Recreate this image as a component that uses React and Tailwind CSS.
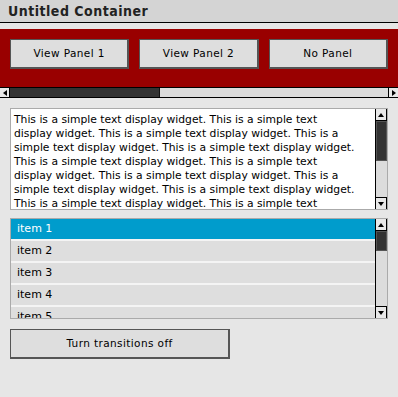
import React from 'react';

// --- small retro widgets ---

const Arrow = ({ dir }) => {
  const pts = {
    up: '1,6 4,2 7,6',
    down: '1,2 4,6 7,2',
    left: '6,1 2,4 6,7',
    right: '2,1 6,4 2,7',
  };
  return (
    <svg width="8" height="8" viewBox="0 0 8 8">
      <polygon points={pts[dir]} fill="#000" />
    </svg>
  );
};

const ArrowBox = ({ dir, className = '' }) => (
  <div className={`flex items-center justify-center bg-[#e8e8e8] border border-black ${className}`}>
    <Arrow dir={dir} />
  </div>
);

const VScroll = ({ thumbTop, thumbHeight }) => (
  <div className="flex flex-col w-[12px] h-full bg-[#dcdcdc] border-l border-black">
    <ArrowBox dir="up" className="h-[12px] border-l-0 border-t-0" />
    <div className="flex-1 flex flex-col">
      <div style={{ height: thumbTop }} />
      <div className="bg-[#333] border border-[#555]" style={{ height: thumbHeight }} />
    </div>
    <ArrowBox dir="down" className="h-[12px] border-l-0 border-b-0" />
  </div>
);

const RetroButton = ({ children, className = '' }) => (
  <button
    className={`h-[30px] bg-[#dedede] border border-[#555] border-b-2 border-r-2 text-[10.5px] tracking-[0.4px] text-black ${className}`}
    style={{ fontFamily: '"DejaVu Sans", sans-serif' }}
  >
    {children}
  </button>
);

const App = () => {
  const textLines = [
    'This is a simple text display widget. This is a simple text',
    'display widget. This is a simple text display widget. This is a',
    'simple text display widget. This is a simple text display widget.',
  ];
  // only the lines visible in the box
  const lines = [...textLines, ...textLines, textLines[0]];
  const items = ['item 1', 'item 2', 'item 3', 'item 4', 'item 5'];

  return (
    <div
      className="w-[398px] h-[397px] bg-[#e6e6e6] overflow-hidden"
      style={{ fontFamily: '"DejaVu Sans", sans-serif' }}
    >
      <div className="h-[23px] bg-[#d4d4d4] border-b border-black flex items-center pl-[8px]">
        <span
          className="text-[14px] font-bold text-[#222] tracking-[0.5px]"
          style={{ fontFamily: '"DejaVu Sans Condensed", "DejaVu Sans", sans-serif', fontStretch: 'condensed' }}
        >
          Untitled Container
        </span>
      </div>

      <div className="mt-[6px] h-[58px] bg-[#990000] flex items-start gap-[10px] px-[10px] pt-[10px]">
        <RetroButton className="w-[120px]">View Panel 1</RetroButton>
        <RetroButton className="w-[120px]">View Panel 2</RetroButton>
        <RetroButton className="w-[120px]">No Panel</RetroButton>
      </div>

      <div className="h-[11px] border-y border-black bg-[#dcdcdc] flex">
        <ArrowBox dir="left" className="w-[10px] border-y-0 border-l-0" />
        <div className="w-[150px] bg-[#333] border-r border-[#111]" />
        <div className="flex-1" />
        <ArrowBox dir="right" className="w-[10px] border-y-0 border-r-0" />
      </div>

      <div className="mx-[10px] mt-[10px] h-[102px] border border-[#aaa] bg-white flex">
        <div className="flex-1 overflow-hidden pl-[3px] pt-[4px] text-[10.75px] leading-[14px] text-black">
          {lines.map((l, i) => (
            <div key={i} className="whitespace-nowrap">{l}</div>
          ))}
        </div>
        <VScroll thumbTop={0} thumbHeight={40} />
      </div>

      <div className="mx-[10px] mt-[8px] h-[101px] border border-[#aaa] bg-[#f4f4f4] flex">
        <div className="flex-1 overflow-hidden flex flex-col gap-[2px]">
          {items.map((it, i) => (
            <div
              key={it}
              className={`h-[20px] shrink-0 flex items-center pl-[6px] text-[11px] ${
                i === 0 ? 'bg-[#009ccc] text-white' : 'bg-[#dedede] text-black'
              }`}
            >
              {it}
            </div>
          ))}
        </div>
        <VScroll thumbTop={0} thumbHeight={20} />
      </div>

      <div className="px-[10px] mt-[10px]">
        <RetroButton className="w-[220px]">Turn transitions off</RetroButton>
      </div>
    </div>
  );
};

export default App;
